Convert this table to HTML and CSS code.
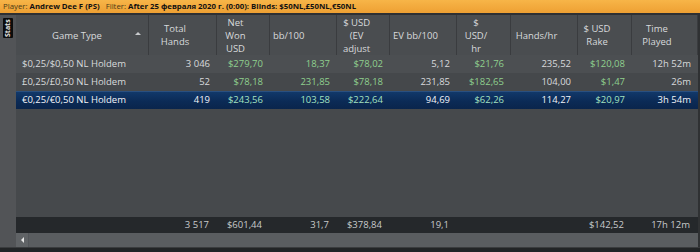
FILE: index.html
```html
<!DOCTYPE html>
<html>
<head>
<meta charset="utf-8">
<link rel="stylesheet" href="styles.css">
</head>
<body>
<div class="app">
  <div class="topbar">
    <span class="lbl">Player:</span> <b>Andrew Dee F (PS)</b>
    <span class="lbl sp">Filter:</span> <b>After 25 февраля 2020 г. (0:00): Blinds: $50NL,£50NL,€50NL</b>
  </div>
  <div class="main">
    <div class="sidebar"><div class="tab">Stats</div></div>
    <div class="table">
      <div class="row head">
        <div class="hc first">Game Type<span class="sort"></span></div>
        <div class="hc">Total<br>Hands</div>
        <div class="hc">Net<br>Won<br>USD</div>
        <div class="hc left">bb/100</div>
        <div class="hc clip">$ USD<br>(EV<br>adjust</div>
        <div class="hc">EV bb/100</div>
        <div class="hc">$<br>USD/<br>hr</div>
        <div class="hc">Hands/hr</div>
        <div class="hc">$ USD<br>Rake</div>
        <div class="hc">Time<br>Played</div>
      </div>
      <div class="row data r1">
        <div class="c name">$0,25/$0,50 NL Holdem</div>
        <div class="c">3 046</div>
        <div class="c g">$279,70</div>
        <div class="c g">18,37</div>
        <div class="c g">$78,02</div>
        <div class="c">5,12</div>
        <div class="c g">$21,76</div>
        <div class="c">235,52</div>
        <div class="c g">$120,08</div>
        <div class="c">12h 52m</div>
      </div>
      <div class="row data r2">
        <div class="c name">£0,25/£0,50 NL Holdem</div>
        <div class="c">52</div>
        <div class="c g">$78,18</div>
        <div class="c g">231,85</div>
        <div class="c g">$78,18</div>
        <div class="c">231,85</div>
        <div class="c g">$182,65</div>
        <div class="c">104,00</div>
        <div class="c g">$1,47</div>
        <div class="c">26m</div>
      </div>
      <div class="row data sel">
        <div class="c name">€0,25/€0,50 NL Holdem</div>
        <div class="c">419</div>
        <div class="c g">$243,56</div>
        <div class="c g">103,58</div>
        <div class="c g">$222,64</div>
        <div class="c">94,69</div>
        <div class="c g">$62,26</div>
        <div class="c">114,27</div>
        <div class="c g">$20,97</div>
        <div class="c">3h 54m</div>
      </div>
      <div class="empty"></div>
      <div class="row total">
        <div class="c"></div>
        <div class="c">3 517</div>
        <div class="c">$601,44</div>
        <div class="c">31,7</div>
        <div class="c">$378,84</div>
        <div class="c">19,1</div>
        <div class="c"></div>
        <div class="c"></div>
        <div class="c">$142,52</div>
        <div class="c">17h 12m</div>
      </div>
      <div class="scroll">
        <div class="sbtn"><span class="arrow"></span></div>
        <div class="track"></div>
      </div>
    </div>
  </div>
  <div class="bottom"></div>
</div>
</body>
</html>
```
FILE: styles.css
```css
* { box-sizing: border-box; }
html, body { margin: 0; padding: 0; }
body {
  width: 700px;
  height: 252px;
  overflow: hidden;
  background: #232527;
  font-family: "Open Sans", "Liberation Sans", sans-serif;
  font-size: 9.5px;
  color: #d8dadc;
}
.app { display: flex; flex-direction: column; height: 252px; }

.topbar {
  height: 13px;
  background: linear-gradient(#f7b548, #eea033);
  color: #111;
  font-size: 7.8px;
  line-height: 13px;
  padding-left: 3px;
  white-space: nowrap;
  border-bottom: 2px solid #2e3033;
  box-sizing: content-box;
}
.topbar .lbl { color: #4a3a18; }
.topbar .sp { margin-left: 4px; }
.topbar b { font-weight: 700; }

.main { display: flex; height: 232px; }
.sidebar {
  width: 16px;
  background: #525457;
  padding: 3px 0 0 3px;
}
.tab {
  width: 10px;
  height: 20px;
  background: #0c0c0c;
  color: #e8e8e8;
  border-radius: 1px;
  font-size: 7px;
  font-weight: 700;
  writing-mode: vertical-rl;
  transform: rotate(180deg);
  display: flex;
  align-items: center;
  justify-content: center;
  line-height: 10px;
}

.table {
  width: 684px;
  display: flex;
  flex-direction: column;
  background: #46494c;
  border-right: 2px solid #2f3133;
}
.row {
  display: grid;
  grid-template-columns: 133px 68px 53px 67px 53px 67px 54px 67px 54px 66px;
}
.head {
  height: 40px;
  background: #4a4d50;
}
.hc {
  position: relative;
  display: flex;
  align-items: center;
  justify-content: center;
  text-align: center;
  padding-right: 15px;
  line-height: 13px;
  border-right: 1px solid #3a3c3f;
  color: #d8dadc;
  overflow: hidden;
  white-space: nowrap;
}
.hc.left { justify-content: flex-start; padding-left: 3px; }
.hc.clip { justify-content: flex-start; padding-left: 6px; text-align: center; }
.hc.first { padding-right: 10px; }
.sort {
  position: absolute;
  right: 7px;
  top: 17px;
  width: 0;
  height: 0;
  border-left: 3px solid transparent;
  border-right: 3px solid transparent;
  border-bottom: 3px solid #c8cacc;
}

.data { height: 18px; }
.r1 { background: #4c4f52; }
.r2 { background: #45484b; }
.sel {
  background: linear-gradient(#123a6c, #0b2a55 60%, #0a254c);
  color: #f2f4f8;
  box-shadow: inset 0 1px 0 #2a5080;
}
.c {
  text-align: right;
  padding-right: 7px;
  line-height: 18px;
  white-space: nowrap;
  overflow: hidden;
}
.c.name { text-align: left; padding-left: 6px; padding-right: 0; }
.c.g { color: #8fd08e; }
.sel .c.g { color: #a4e2c0; }

.empty { height: 108px; background: #46494c; }
.total { height: 16px; background: #25282b; color: #c8cacc; }
.total .c { line-height: 16px; padding-right: 8px; }

.scroll { height: 14px; display: flex; background: #5a5d60; }
.sbtn {
  width: 13px;
  display: flex;
  align-items: center;
  justify-content: center;
  background: #606366;
  border-right: 1px solid #53565a;
}
.arrow {
  width: 0;
  height: 0;
  border-top: 3px solid transparent;
  border-bottom: 3px solid transparent;
  border-right: 3px solid #e6e6e6;
}
.track { flex: 1; }

.bottom { height: 5px; background: #222426; border-top: 1px solid #3a3c3e; }
```
